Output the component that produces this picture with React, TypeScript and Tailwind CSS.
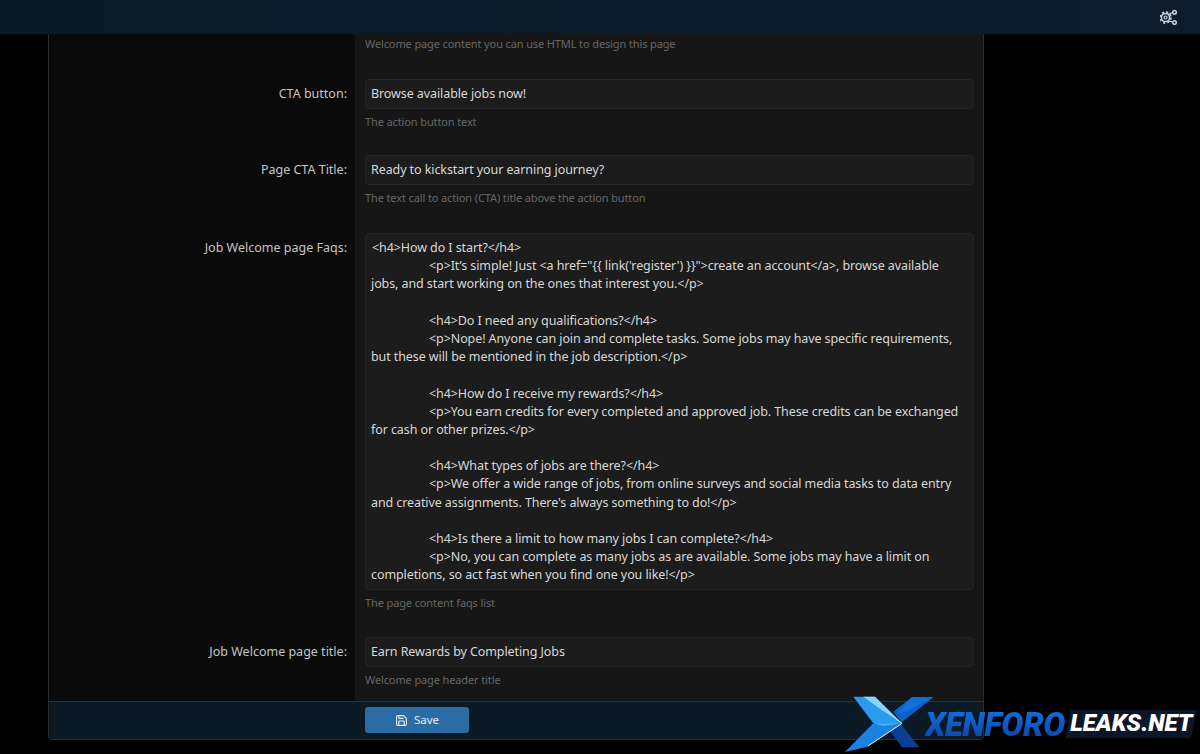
import React from "react";
import { Save } from "lucide-react";

// Ligne de la zone de texte
const faqLines: { text: string; indent?: boolean }[] = [
  { text: "<h4>How do I start?</h4>" },
  { text: "<p>It’s simple! Just <a href=\"{{ link('register') }}\">create an account</a>, browse available", indent: true },
  { text: "jobs, and start working on the ones that interest you.</p>" },
  { text: "" },
  { text: "<h4>Do I need any qualifications?</h4>", indent: true },
  { text: "<p>Nope! Anyone can join and complete tasks. Some jobs may have specific requirements,", indent: true },
  { text: "but these will be mentioned in the job description.</p>" },
  { text: "" },
  { text: "<h4>How do I receive my rewards?</h4>", indent: true },
  { text: "<p>You earn credits for every completed and approved job. These credits can be exchanged", indent: true },
  { text: "for cash or other prizes.</p>" },
  { text: "" },
  { text: "<h4>What types of jobs are there?</h4>", indent: true },
  { text: "<p>We offer a wide range of jobs, from online surveys and social media tasks to data entry", indent: true },
  { text: "and creative assignments. There's always something to do!</p>" },
  { text: "" },
  { text: "<h4>Is there a limit to how many jobs I can complete?</h4>", indent: true },
  { text: "<p>No, you can complete as many jobs as are available. Some jobs may have a limit on", indent: true },
  { text: "completions, so act fast when you find one you like!</p>" },
];

const Row = ({
  label,
  hint,
  children,
  gap = "pb-[26px]",
}: {
  label: string;
  hint: string;
  children: React.ReactNode;
  gap?: string;
}) => (
  <div className="flex">
    <div className="w-[306px] shrink-0 bg-[#0a0a0a] pr-[8px] pt-[6px] text-right text-[12.5px] leading-[18px] text-[#c4c4c4]">
      {label}
    </div>
    <div className={`min-w-0 flex-1 bg-[#161616] pl-[10px] pr-[9px] ${gap}`}>
      {children}
      <p className="mt-[4px] h-[17px] text-[11px] leading-[17px] tracking-[-0.12px] text-[#666666]">{hint}</p>
    </div>
  </div>
);

const TextInput = ({ value }: { value: string }) => (
  <div className="h-[30px] rounded-[4px] border border-[#252525] bg-[#1c1c1c] px-[5px] text-[12.5px] leading-[28px] tracking-[-0.09px] text-[#d8d8d8]">
    {value}
  </div>
);

const GearNodes = () => (
  <svg width="18" height="16" viewBox="0 0 18 16" fill="none" stroke="#c9d3dc">
    <circle cx="5.5" cy="8.5" r="4.1" strokeWidth="1.5" />
    <circle cx="5.5" cy="8.5" r="5.5" strokeWidth="1.6" strokeDasharray="2.2 2.12" />
    <circle cx="5.5" cy="8.5" r="1.5" strokeWidth="1.2" />
    <path d="M8.8 5 13 3.6M8.8 12 13 13.2" strokeWidth="1.2" />
    <circle cx="14.5" cy="3.2" r="1.8" strokeWidth="1.5" fill="#0b1c2a" />
    <circle cx="14.5" cy="13.5" r="1.8" strokeWidth="1.5" fill="#0b1c2a" />
  </svg>
);

// Le X du logo, viewBox à 3x
const LogoMark = () => (
  <svg width="120" height="64" viewBox="0 0 360 192" className="shrink-0">
    <polygon points="150,122 182,102 238,172 186,172" fill="#0a3f98" />
    <polygon points="160,65 215,22 280,22 185,97" fill="#0d5fcb" />
    <polygon points="215,22 280,22 205,62 170,72" fill="#1270dc" />
    <polygon points="40,20 105,20 186,100 100,100" fill="#2a9cf0" />
    <polygon points="70,20 105,20 186,100 125,60" fill="#8fd2f8" />
    <polygon points="100,100 186,100 82,170 15,186" fill="#1c82e2" />
    <polygon points="100,100 186,100 130,108" fill="#4bb0f2" />
    <path d="M84 168 186 100 170 88" stroke="#e6f5ff" strokeWidth="3" fill="none" />
  </svg>
);

export default function App() {
  return (
    <div className="flex h-[754px] w-[1200px] flex-col overflow-hidden bg-black font-['Noto_Sans',sans-serif]">
      <header className="flex h-[34px] shrink-0 items-center justify-end bg-gradient-to-r from-[#0b1a27] to-[#0b1c2b] pr-[22px]">
        <GearNodes />
      </header>

      <div className="mx-[48px] w-[936px] rounded-b-[4px] border-x border-b border-[#2a2e32]">
        <div className="flex">
          <div className="w-[306px] shrink-0 bg-[#0a0a0a]" />
          <div className="flex-1 bg-[#161616] pb-[26px] pl-[10px]">
            <p className="h-[19px] text-[11px] leading-[20px] tracking-[-0.12px] text-[#666666]">
              Welcome page content you can use HTML to design this page
            </p>
          </div>
        </div>

        <Row label="CTA button:" hint="The action button text" gap="pb-[25px]">
          <TextInput value="Browse available jobs now!" />
        </Row>

        <Row label="Page CTA Title:" hint="The text call to action (CTA) title above the action button" gap="pb-[27px]">
          <TextInput value="Ready to kickstart your earning journey?" />
        </Row>

        <Row label="Job Welcome page Faqs:" hint="The page content faqs list">
          <div className="h-[357px] overflow-hidden rounded-[4px] border border-[#252525] bg-[#1c1c1c] pl-[5px] pt-[5px] text-[12.5px] leading-[18.2px] tracking-[-0.09px] text-[#d8d8d8]">
            {faqLines.map((l, i) => (
              <div key={i} className={`h-[18.2px] whitespace-pre ${l.indent ? "pl-[58px]" : i === 0 ? "pl-[1px]" : ""}`}>
                {l.text}
              </div>
            ))}
          </div>
        </Row>

        <Row label="Job Welcome page title:" hint="Welcome page header title" gap="pb-[13px]">
          <TextInput value="Earn Rewards by Completing Jobs" />
        </Row>

        <div className="h-[38px] rounded-b-[4px] border-t border-[#24303a] bg-[#0c1a26] pl-[316px] pt-[5px]">
          <button className="flex h-[26px] w-[104px] items-center justify-center gap-[6px] rounded-[3px] bg-[#2b6ca5] text-[11.5px] text-[#e6eef5]">
            <Save size={13} strokeWidth={2} />
            Save
          </button>
        </div>
      </div>

      {/* Logo par dessus la page */}
      <div className="absolute left-[840px] top-[690px] flex h-[64px] items-center">
        <LogoMark />
        <span className="ml-[-35px] mt-[4px] bg-gradient-to-b from-[#1470e0] to-[#0a45a8] bg-clip-text pr-[2px] font-['Roboto',sans-serif] text-[33px] font-black italic leading-none tracking-[-0.5px] text-transparent">
          XENFORO
        </span>
        <span className="ml-[1px] mt-[4px] -skew-x-12 bg-[#0b1729] px-[2px] py-[1px]">
          <span className="inline-block skew-x-12 font-['Roboto',sans-serif] text-[24px] font-black italic leading-none text-white">
            LEAKS.NET
          </span>
        </span>
      </div>
    </div>
  );
}
